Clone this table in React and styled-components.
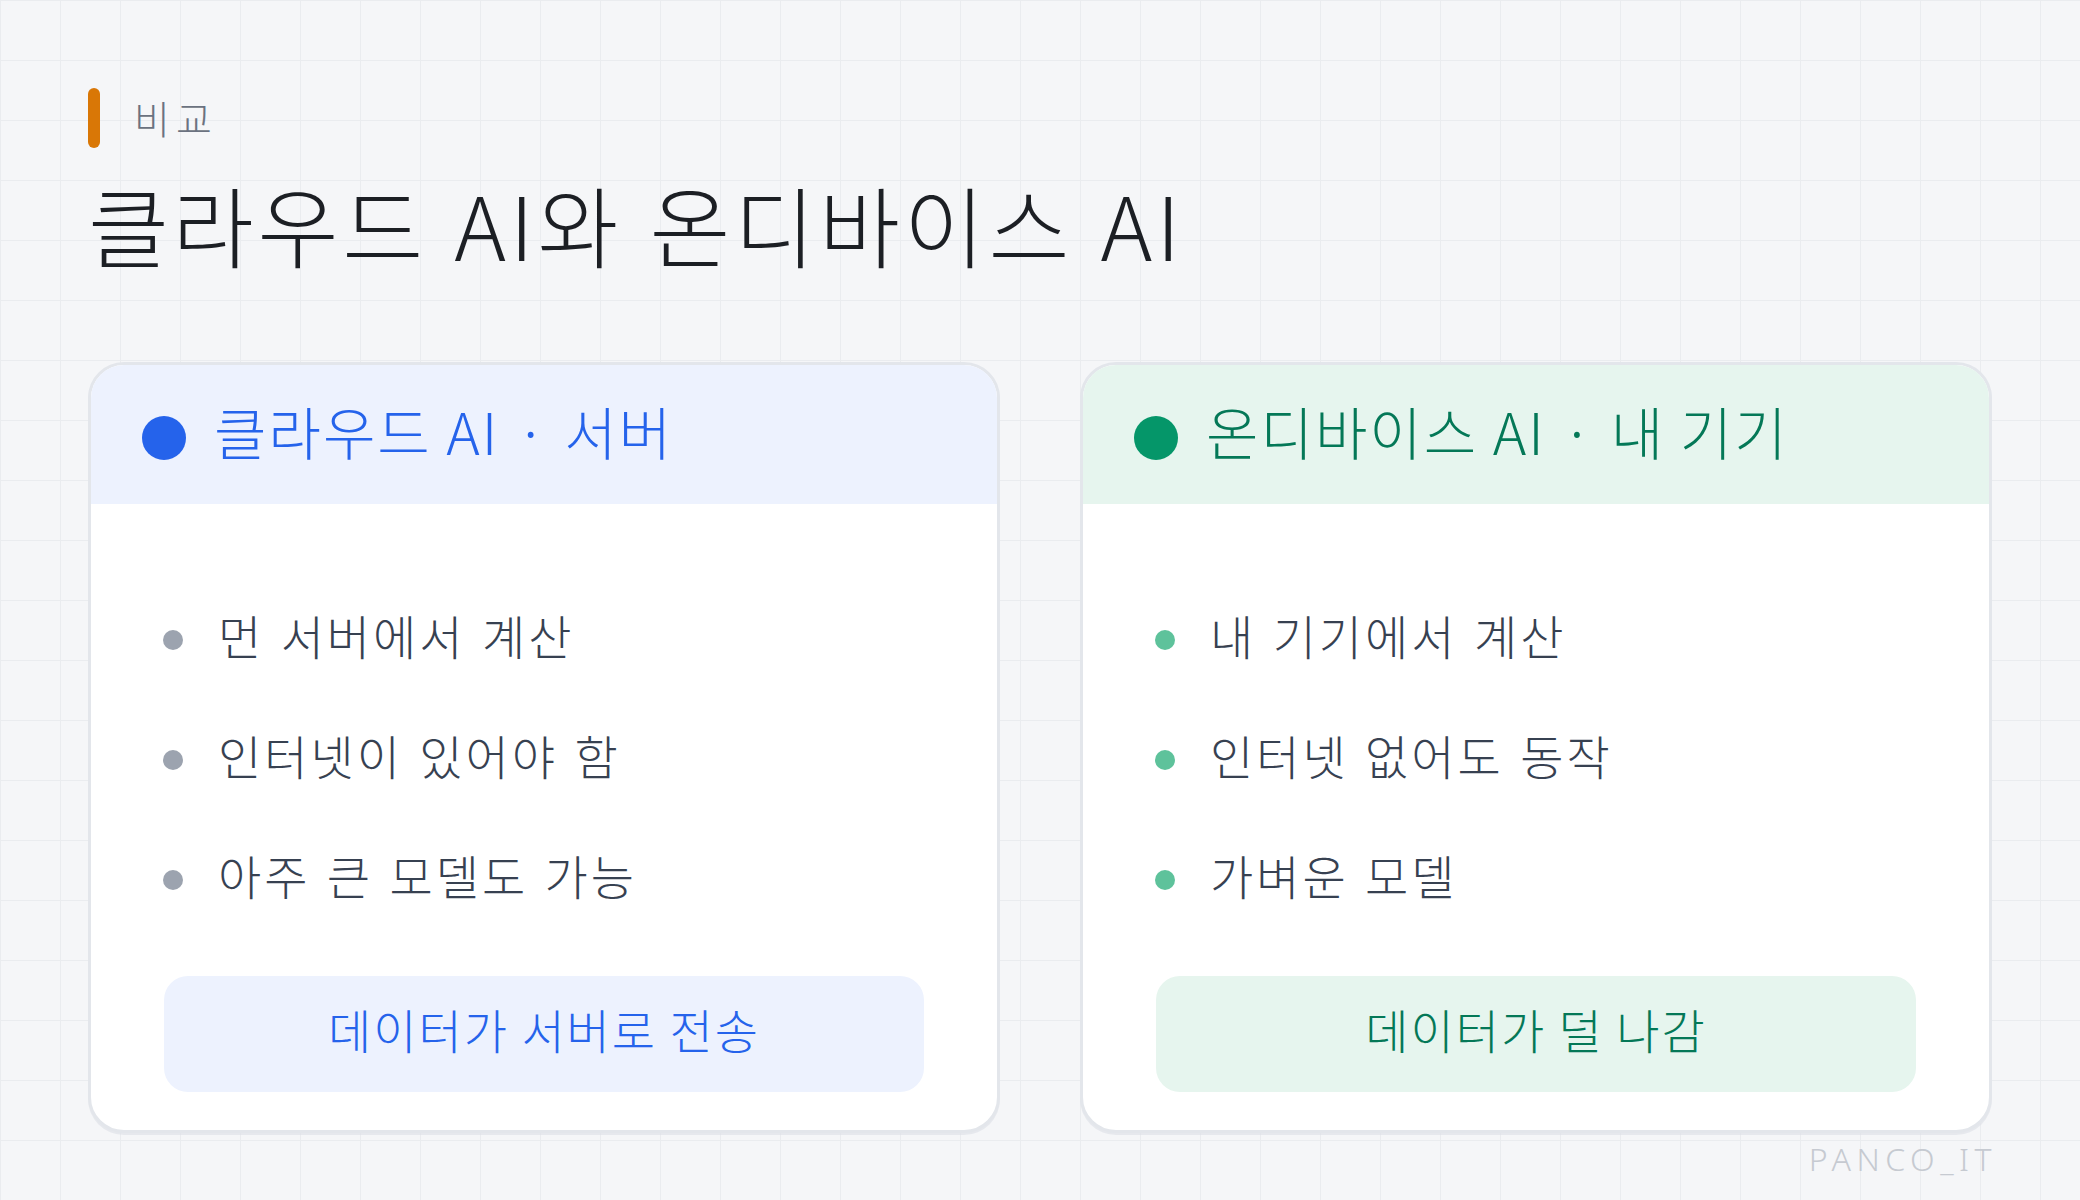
import React from "react";
import styled, { createGlobalStyle } from "styled-components";

const Global = createGlobalStyle`
  html, body { margin: 0; padding: 0; }
  body {
    font-family: "Noto Sans CJK KR", "Noto Sans", sans-serif;
    background: #f5f6f8;
  }
  * { box-sizing: border-box; }
`;

const Page = styled.div`
  width: 2080px;
  height: 1200px;
  padding: 88px 88px 0;
  background-color: #f5f6f8;
  background-image:
    linear-gradient(to right, #eaecef 1px, transparent 1px),
    linear-gradient(to bottom, #eaecef 1px, transparent 1px);
  background-size: 60px 60px;
  display: flex;
  flex-direction: column;
  overflow: hidden;
  font-weight: 300;
`;

const Eyebrow = styled.div`
  display: flex;
  align-items: center;
  gap: 34px;
  height: 60px;
`;

const Bar = styled.span`
  width: 12px;
  height: 60px;
  border-radius: 6px;
  background: #d97706;
`;

const EyebrowText = styled.span`
  font-size: 39px;
  line-height: 1;
  color: #6b7280;
  letter-spacing: 6px;
  margin-bottom: 2px;
`;

const Title = styled.h1`
  margin: 22px 0 0;
  font-size: 88px;
  font-weight: 300;
  line-height: 1.2;
  color: #1c1f24;
  letter-spacing: 3.8px;
  word-spacing: 4px;
`;

const Cards = styled.div`
  display: grid;
  grid-template-columns: 1fr 1fr;
  gap: 80px;
  margin-top: 86px;
`;

const Card = styled.section`
  background: #ffffff;
  border: 3px solid #e3e6eb;
  border-radius: 36px;
  overflow: hidden;
  display: flex;
  flex-direction: column;
  box-shadow: 0 2px 0 rgba(220, 224, 230, 0.6);
`;

const CardHeader = styled.header`
  height: 139px;
  background: ${(p) => p.$soft};
  display: flex;
  align-items: center;
  gap: 28px;
  padding: 0 51px;
`;

const HeaderDot = styled.span`
  width: 44px;
  height: 44px;
  border-radius: 50%;
  background: ${(p) => p.$color};
  flex: none;
  margin-top: 8px;
`;

const HeaderTitle = styled.h2`
  margin: 0 0 8px;
  font-size: 57px;
  font-weight: 300;
  line-height: 1;
  letter-spacing: 2px;
  color: ${(p) => p.$color};
`;

const Sep = styled.span`
  margin: 0 16px;
`;

const CardBody = styled.div`
  display: flex;
  flex-direction: column;
  padding: 74px 73px 38px;
`;

const List = styled.ul`
  list-style: none;
  margin: 0;
  padding: 0;
`;

const Item = styled.li`
  height: 120px;
  display: flex;
  align-items: center;
  gap: 35px;
  font-size: 47px;
  color: #374151;
  line-height: 1;
`;

const ItemDot = styled.span`
  width: 20px;
  height: 20px;
  border-radius: 50%;
  background: ${(p) => p.$color};
  flex: none;
  margin-left: -1px;
  margin-top: 4px;
`;

const ItemText = styled.span`
  letter-spacing: 3px;
  word-spacing: 3px;
  margin-bottom: 6px;
`;

const Pill = styled.div`
  margin-top: 38px;
  height: 116px;
  border-radius: 24px;
  background: ${(p) => p.$soft};
  color: ${(p) => p.$color};
  font-size: 47px;
  letter-spacing: 2px;
  display: flex;
  align-items: center;
  justify-content: center;
  line-height: 1;
  padding-bottom: 10px;
`;

const Footer = styled.div`
  display: flex;
  justify-content: flex-end;
  margin-top: 4px;
`;

const Watermark = styled.span`
  font-family: "Noto Sans", "Noto Sans CJK KR", sans-serif;
  font-weight: 300;
  font-size: 32px;
  letter-spacing: 5.5px;
  color: #c6cad1;
  margin-right: -5px;
`;

const cards = [
  {
    title: "클라우드 AI",
    sub: "서버",
    color: "#2563eb",
    dot: "#2563eb",
    soft: "#edf2fe",
    bullet: "#9ca3af",
    items: ["먼 서버에서 계산", "인터넷이 있어야 함", "아주 큰 모델도 가능"],
    pill: "데이터가 서버로 전송",
  },
  {
    title: "온디바이스 AI",
    sub: "내 기기",
    color: "#047857",
    dot: "#059669",
    soft: "#e6f5ee",
    bullet: "#5ec29b",
    items: ["내 기기에서 계산", "인터넷 없어도 동작", "가벼운 모델"],
    pill: "데이터가 덜 나감",
  },
];

export default function App() {
  return (
    <>
      <Global />
      <Page>
        <Eyebrow>
          <Bar />
          <EyebrowText>비교</EyebrowText>
        </Eyebrow>
        <Title>클라우드 AI와 온디바이스 AI</Title>
        <Cards>
          {cards.map((c) => (
            <Card key={c.title}>
              <CardHeader $soft={c.soft}>
                <HeaderDot $color={c.dot} />
                <HeaderTitle $color={c.color}>
                  {c.title}
                  <Sep>·</Sep>
                  {c.sub}
                </HeaderTitle>
              </CardHeader>
              <CardBody>
                <List>
                  {c.items.map((t) => (
                    <Item key={t}>
                      <ItemDot $color={c.bullet} />
                      <ItemText>{t}</ItemText>
                    </Item>
                  ))}
                </List>
                <Pill $soft={c.soft} $color={c.color}>
                  {c.pill}
                </Pill>
              </CardBody>
            </Card>
          ))}
        </Cards>
        <Footer>
          <Watermark>PANCO_IT</Watermark>
        </Footer>
      </Page>
    </>
  );
}
